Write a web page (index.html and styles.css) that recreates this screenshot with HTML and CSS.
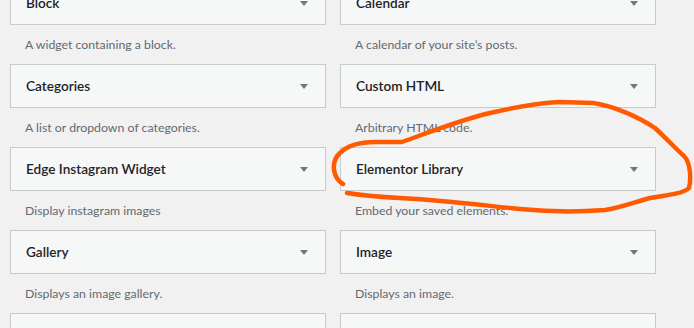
FILE: index.html
```html
<!DOCTYPE html>
<html lang="en">
<head>
    <meta charset="UTF-8">
    <meta name="viewport" content="width=device-width, initial-scale=1.0">
    <title>Available Widgets</title>
    <link rel="stylesheet" href="styles.css">
</head>
<body>
    <div class="widget-list">
        <div class="widget">
            <div class="widget-top"><h3>Block</h3><span class="toggle"></span></div>
            <div class="widget-desc">A widget containing a block.</div>
        </div>
        <div class="widget">
            <div class="widget-top"><h3>Calendar</h3><span class="toggle"></span></div>
            <div class="widget-desc">A calendar of your site’s posts.</div>
        </div>
        <div class="widget">
            <div class="widget-top"><h3>Categories</h3><span class="toggle"></span></div>
            <div class="widget-desc">A list or dropdown of categories.</div>
        </div>
        <div class="widget">
            <div class="widget-top"><h3>Custom HTML</h3><span class="toggle"></span></div>
            <div class="widget-desc">Arbitrary HTML code.</div>
        </div>
        <div class="widget">
            <div class="widget-top"><h3>Edge Instagram Widget</h3><span class="toggle"></span></div>
            <div class="widget-desc">Display instagram images</div>
        </div>
        <div class="widget">
            <div class="widget-top"><h3>Elementor Library</h3><span class="toggle"></span></div>
            <div class="widget-desc">Embed your saved elements.</div>
        </div>
        <div class="widget">
            <div class="widget-top"><h3>Gallery</h3><span class="toggle"></span></div>
            <div class="widget-desc">Displays an image gallery.</div>
        </div>
        <div class="widget">
            <div class="widget-top"><h3>Image</h3><span class="toggle"></span></div>
            <div class="widget-desc">Displays an image.</div>
        </div>
        <div class="widget">
            <div class="widget-top"></div>
        </div>
        <div class="widget">
            <div class="widget-top"></div>
        </div>
    </div>

    <!-- hand drawn highlight round the Elementor widget -->
    <svg class="scribble" width="694" height="328" viewBox="0 0 694 328">
        <path d="M343 184 C333 178 330 162 340 153 C348 145 360 142 375 142 L402 142 C430 132 460 120 490 113 C520 106 540 103 560 102 L593 103 C615 106 640 118 655 128 C668 140 675 148 684 156 C691 163 691 180 689 188 C684 193 670 195 650 198 C635 202 620 208 605 210 C580 212 550 212 520 209 C480 205 440 200 400 198 C380 197 360 195 347 193"
              fill="none" stroke="#ff5a00" stroke-width="4.5" stroke-linecap="round" stroke-linejoin="round"/>
    </svg>
</body>
</html>
```

FILE: styles.css
```css
body {
    margin: 0;
    background-color: #f1f1f1;
    font-family: Lato, "Open Sans", sans-serif;
    font-size: 13px;
    color: #23282d;
    overflow: hidden;
}

.widget-list {
    display: grid;
    grid-template-columns: 316px 316px;
    column-gap: 14px;
    padding: 0 10px;
    margin-top: -19px;
}

.widget {
    height: 83px;
}

.widget-top {
    box-sizing: border-box;
    height: 44px;
    display: flex;
    align-items: center;
    justify-content: space-between;
    padding: 0 17px 0 15px;
    background-color: #f6f7f7;
    border: 1px solid #c8cbce;
}

.widget-top h3 {
    margin: 0;
    font-size: 13.6px;
    font-weight: 600;
    color: #1d2327;
}

.toggle {
    width: 0;
    height: 0;
    border-left: 4px solid transparent;
    border-right: 4px solid transparent;
    border-top: 5px solid #72777c;
}

.widget-desc {
    margin-top: 11px;
    padding-left: 15px;
    line-height: 18px;
    font-size: 12.3px;
    color: #646970;
}

.scribble {
    position: absolute;
    top: 0;
    left: 0;
    pointer-events: none;
}
```
